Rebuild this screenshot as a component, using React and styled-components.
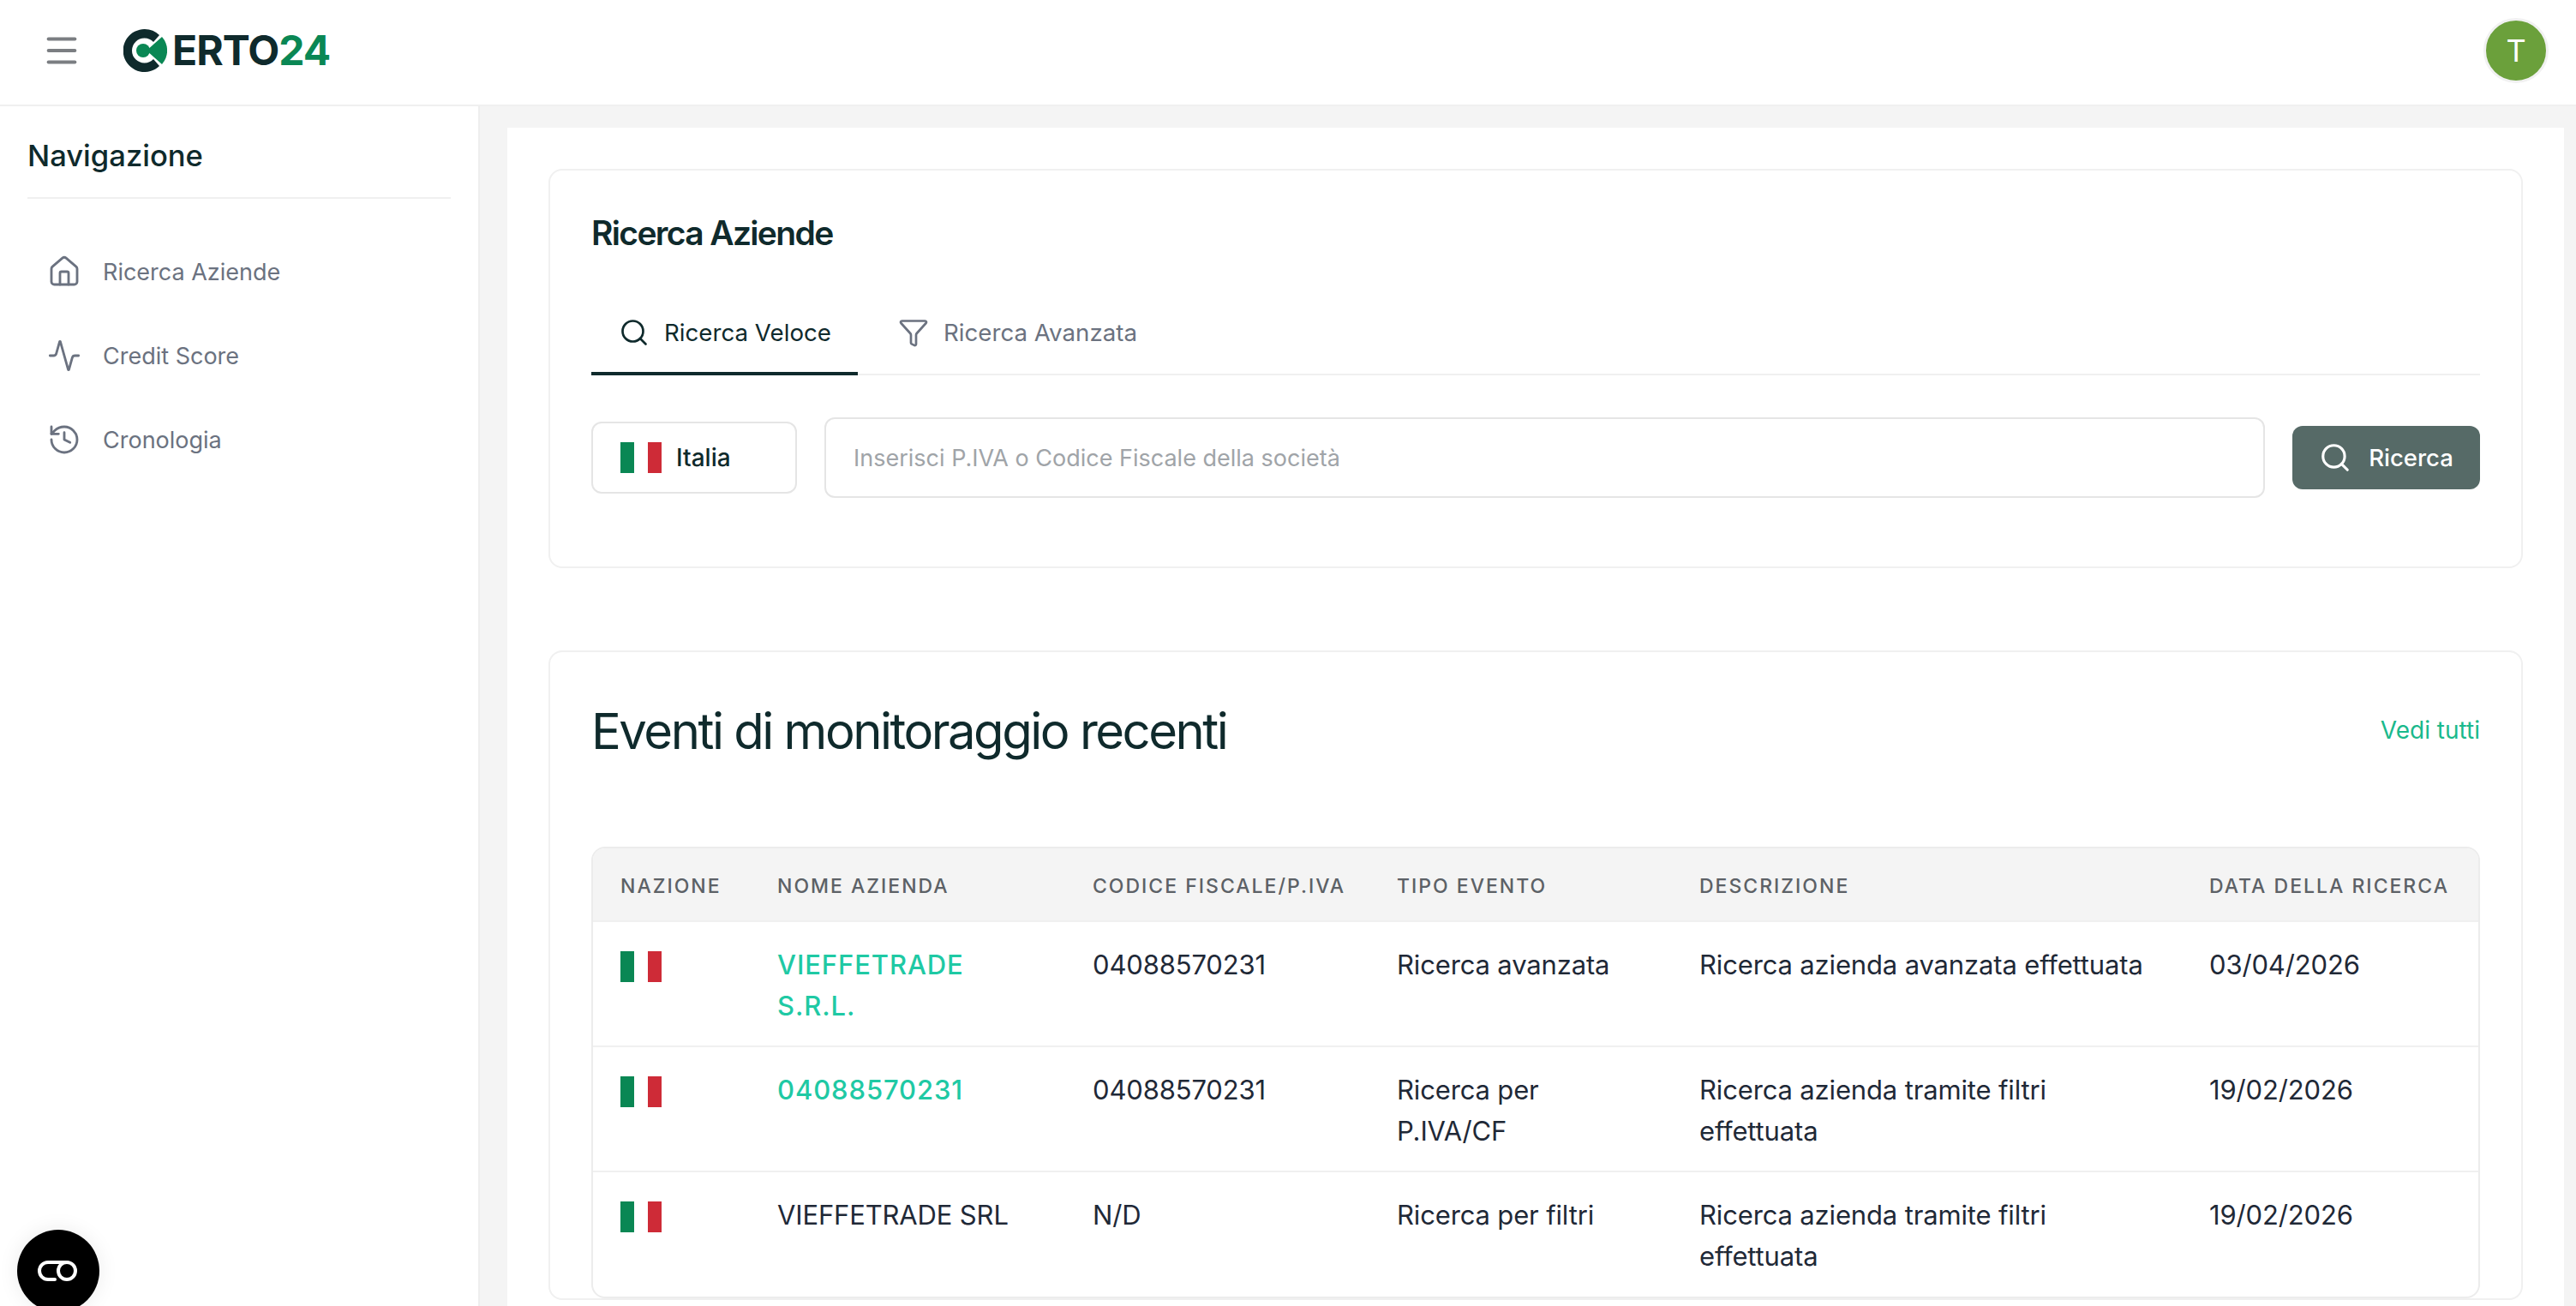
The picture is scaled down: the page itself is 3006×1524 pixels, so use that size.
import React from "react";
import styled, { createGlobalStyle } from "styled-components";
import { Menu, House, Activity, History, Search, Funnel } from "lucide-react";

const COLORS = {
  ink: "#0f2a2c",
  text: "#1f2937",
  muted: "#6b7280",
  line: "#f0f0f0",
  page: "#f4f4f4",
  green: "#0a8754",
  link: "#1fc9a4",
};

const GlobalStyle = createGlobalStyle`
  html, body {
    margin: 0;
    padding: 0;
    height: 100%;
    overflow: hidden;
    background: #fff;
    font-family: Inter, "Liberation Sans", sans-serif;
  }
  * { box-sizing: border-box; }
`;

const Page = styled.div`
  position: relative;
  width: 3006px;
  height: 1524px;
  overflow: hidden;
  display: flex;
  flex-direction: column;
  background: ${COLORS.page};
`;

const TopBar = styled.header`
  flex: 0 0 124px;
  display: flex;
  align-items: center;
  justify-content: space-between;
  padding: 0 32px 4px 49px;
  background: #fff;
  border-bottom: 2px solid ${COLORS.line};
`;

const TopLeft = styled.div`
  display: flex;
  align-items: center;
  gap: 49px;
  color: #7b7e82;
`;

const LogoWrap = styled.div`
  display: flex;
  align-items: center;
  gap: 6px;
`;

const LogoText = styled.span`
  font-family: Inter, sans-serif;
  font-size: 48px;
  font-weight: 700;
  letter-spacing: -1px;
  line-height: 1;
  color: ${COLORS.ink};
`;

const LogoAccent = styled.span`
  color: ${COLORS.green};
`;

const Avatar = styled.div`
  width: 76px;
  height: 76px;
  border-radius: 50%;
  border: 3px solid #f1f1f1;
  background: #6ba03b;
  color: #fff;
  display: flex;
  align-items: center;
  justify-content: center;
  font-size: 36px;
`;

const Body = styled.div`
  flex: 1;
  display: flex;
  min-height: 0;
`;

const Sidebar = styled.aside`
  flex: 0 0 560px;
  background: #fff;
  padding: 0 32px;
  border-right: 2px solid #eeeeee;
`;

const SideTitle = styled.div`
  height: 108px;
  padding-top: 29px;
  border-bottom: 2px solid ${COLORS.line};
  font-size: 34.6px;
  font-weight: 500;
  line-height: 56px;
  color: ${COLORS.ink};
`;

const NavList = styled.nav`
  display: flex;
  flex-direction: column;
  gap: 48px;
  padding: 60px 0 0 23px;
`;

const NavItem = styled.a`
  display: flex;
  align-items: center;
  gap: 25px;
  height: 50px;
  font-size: 27px;
  color: ${COLORS.muted};
`;

const Main = styled.main`
  flex: 1;
  padding: 25px 14px 0 32px;
  min-width: 0;
`;

const Panel = styled.div`
  height: 100%;
  background: #fff;
  padding: 48px 48px 0;
  display: flex;
  flex-direction: column;
  gap: 96px;
`;

const Card = styled.section`
  border: 2px solid ${COLORS.line};
  border-radius: 16px;
  padding: ${(p) => p.$pad};
  height: ${(p) => p.$height};
  flex-shrink: 0;
`;

const CardTitle = styled.h2`
  margin: 0;
  font-size: 39px;
  font-weight: 600;
  letter-spacing: -1.65px;
  line-height: 56px;
  color: ${COLORS.ink};
`;

const Tabs = styled.div`
  display: flex;
  margin-top: 48px;
  height: 90px;
  border-bottom: 2px solid ${COLORS.line};
`;

const Tab = styled.button`
  display: flex;
  align-items: center;
  gap: 17px;
  height: 90px;
  padding: 0 31px 7px 32px;
  margin-right: ${(p) => (p.$active ? "15px" : "0")};
  background: none;
  border: none;
  border-bottom: 4px solid ${(p) => (p.$active ? COLORS.ink : "transparent")};
  font-family: inherit;
  font-size: 27.7px;
  font-weight: 400;
  color: ${(p) => (p.$active ? COLORS.ink : COLORS.muted)};
`;

const SearchRow = styled.div`
  display: flex;
  align-items: center;
  gap: 32px;
  margin-top: 49px;
`;

const CountrySelect = styled.div`
  flex: 0 0 240px;
  height: 84px;
  display: flex;
  align-items: center;
  gap: 17px;
  padding-left: 32px;
  border: 2px solid #e5e5e5;
  border-radius: 12px;
  font-size: 28px;
  font-weight: 500;
  color: ${COLORS.ink};
`;

const SearchInput = styled.input`
  flex: 1;
  min-width: 0;
  height: 94px;
  padding: 0 32px;
  border: 2px solid #e5e5e5;
  border-radius: 12px;
  font-family: inherit;
  font-size: 27px;
  color: ${COLORS.text};
  &::placeholder {
    color: #a0a4a8;
  }
`;

const SearchButton = styled.button`
  flex: 0 0 219px;
  height: 74px;
  display: flex;
  align-items: center;
  justify-content: center;
  gap: 20px;
  background: #566a67;
  border: none;
  border-radius: 12px;
  color: #fff;
  font-family: inherit;
  font-size: 27.5px;
  font-weight: 500;
`;

const Flag = styled.span`
  flex: none;
  display: block;
  width: 48px;
  height: 36px;
  background: linear-gradient(
    to right,
    #0a8754 0 33.3%,
    #fff 33.3% 66.6%,
    #ce2b37 66.6% 100%
  );
`;

const EventsHead = styled.div`
  display: flex;
  align-items: center;
  justify-content: space-between;
  height: 96px;
`;

const EventsTitle = styled.h2`
  margin: 0;
  font-size: 58px;
  font-weight: 400;
  letter-spacing: -2.5px;
  color: ${COLORS.ink};
`;

const SeeAll = styled.a`
  font-size: 28px;
  padding-bottom: 2px;
  color: #1ab98c;
`;

const TableWrap = styled.div`
  margin-top: 87px;
  border: 2px solid #ececec;
  border-radius: 16px;
  overflow: hidden;
`;

const Table = styled.table`
  width: 100%;
  border-collapse: collapse;
  table-layout: fixed;
`;

const Th = styled.th`
  height: 85px;
  padding: 3px 0 0 32px;
  background: ${COLORS.page};
  text-align: left;
  font-size: 23px;
  font-weight: 500;
  letter-spacing: 2px;
  text-transform: uppercase;
  white-space: nowrap;
  color: #5c6166;
`;

const Tr = styled.tr`
  border-top: 2px solid ${COLORS.line};
`;

const Td = styled.td`
  height: 146px;
  padding: 26px 32px 22px 32px;
  vertical-align: top;
  font-size: 31px;
  line-height: 48px;
  letter-spacing: ${(p) => (p.$link ? "0.9px" : "-0.15px")};
  color: ${(p) => (p.$link ? COLORS.link : COLORS.text)};
  font-weight: ${(p) => (p.$link ? 500 : 400)};
`;

const FlagCell = styled.div`
  padding-top: 8px;
`;

const ChatFab = styled.button`
  position: absolute;
  left: 20px;
  bottom: -7px;
  width: 96px;
  height: 96px;
  display: flex;
  align-items: center;
  justify-content: center;
  border: none;
  border-radius: 50%;
  background: #000;
  box-shadow: 0 0 24px rgba(0, 0, 0, 0.08);
`;

const columns = [
  { title: "Nazione", width: 183 },
  { title: "Nome azienda", width: 368 },
  { title: "Codice fiscale/P.IVA", width: 355 },
  { title: "Tipo evento", width: 353 },
  { title: "Descrizione", width: 595 },
  { title: "Data della ricerca", width: 350 },
];

const events = [
  {
    name: "VIEFFETRADE S.R.L.",
    link: true,
    code: "04088570231",
    type: "Ricerca avanzata",
    description: "Ricerca azienda avanzata effettuata",
    date: "03/04/2026",
  },
  {
    name: "04088570231",
    link: true,
    code: "04088570231",
    type: "Ricerca per P.IVA/CF",
    description: "Ricerca azienda tramite filtri effettuata",
    date: "19/02/2026",
  },
  {
    name: "VIEFFETRADE SRL",
    link: false,
    code: "N/D",
    type: "Ricerca per filtri",
    description: "Ricerca azienda tramite filtri effettuata",
    date: "19/02/2026",
  },
];

const LogoMark = () => (
  <svg width="51" height="50" viewBox="0 0 51 50">
    <path
      d="M25 0a25 25 0 1 0 17 43l-7-8a14.5 14.5 0 1 1 0-20l7-8A25 25 0 0 0 25 0z"
      fill={COLORS.ink}
    />
    <circle cx="23" cy="25" r="8" fill={COLORS.green} />
    <path d="M27 25L45 9a24 24 0 0 1 0 32z" fill={COLORS.green} />
  </svg>
);

const ChatIcon = () => (
  <svg width="50" height="26" viewBox="0 0 50 26" fill="none" stroke="#fff" strokeWidth="4">
    <path d="M21 23H13a10 10 0 0 1 0-20h22" strokeLinecap="round" />
    <circle cx="35" cy="13" r="10" />
  </svg>
);

const App = () => {
  return (
    <Page>
      <GlobalStyle />
      <TopBar>
        <TopLeft>
          <Menu size={46} strokeWidth={2.1} />
          <LogoWrap>
            <LogoMark />
            <LogoText>
              ERTO<LogoAccent>24</LogoAccent>
            </LogoText>
          </LogoWrap>
        </TopLeft>
        <Avatar>T</Avatar>
      </TopBar>
      <Body>
        <Sidebar>
          <SideTitle>Navigazione</SideTitle>
          <NavList>
            <NavItem>
              <House size={40} strokeWidth={1.7} />
              Ricerca Aziende
            </NavItem>
            <NavItem>
              <Activity size={40} strokeWidth={1.7} />
              Credit Score
            </NavItem>
            <NavItem>
              <History size={40} strokeWidth={1.7} />
              Cronologia
            </NavItem>
          </NavList>
        </Sidebar>
        <Main>
          <Panel>
            <Card $pad="45px 48px 0" $height="466px">
              <CardTitle>Ricerca Aziende</CardTitle>
              <Tabs>
                <Tab $active>
                  <Search size={36} strokeWidth={1.8} />
                  Ricerca Veloce
                </Tab>
                <Tab>
                  <Funnel size={36} strokeWidth={1.8} />
                  Ricerca Avanzata
                </Tab>
              </Tabs>
              <SearchRow>
                <CountrySelect>
                  <Flag />
                  Italia
                </CountrySelect>
                <SearchInput placeholder="Inserisci P.IVA o Codice Fiscale della società" />
                <SearchButton>
                  <Search size={38} strokeWidth={2} />
                  Ricerca
                </SearchButton>
              </SearchRow>
            </Card>
            <Card $pad="44px 48px 0">
              <EventsHead>
                <EventsTitle>Eventi di monitoraggio recenti</EventsTitle>
                <SeeAll>Vedi tutti</SeeAll>
              </EventsHead>
              <TableWrap>
                <Table>
                  <colgroup>
                    {columns.map((col) => (
                      <col key={col.title} width={col.width} />
                    ))}
                  </colgroup>
                  <thead>
                    <tr>
                      {columns.map((col) => (
                        <Th key={col.title}>{col.title}</Th>
                      ))}
                    </tr>
                  </thead>
                  <tbody>
                    {events.map((event) => (
                      <Tr key={event.name}>
                        <Td>
                          <FlagCell>
                            <Flag />
                          </FlagCell>
                        </Td>
                        <Td $link={event.link}>{event.name}</Td>
                        <Td>{event.code}</Td>
                        <Td>{event.type}</Td>
                        <Td>{event.description}</Td>
                        <Td>{event.date}</Td>
                      </Tr>
                    ))}
                  </tbody>
                </Table>
              </TableWrap>
            </Card>
          </Panel>
        </Main>
      </Body>
      <ChatFab>
        <ChatIcon />
      </ChatFab>
    </Page>
  );
};

export default App;
